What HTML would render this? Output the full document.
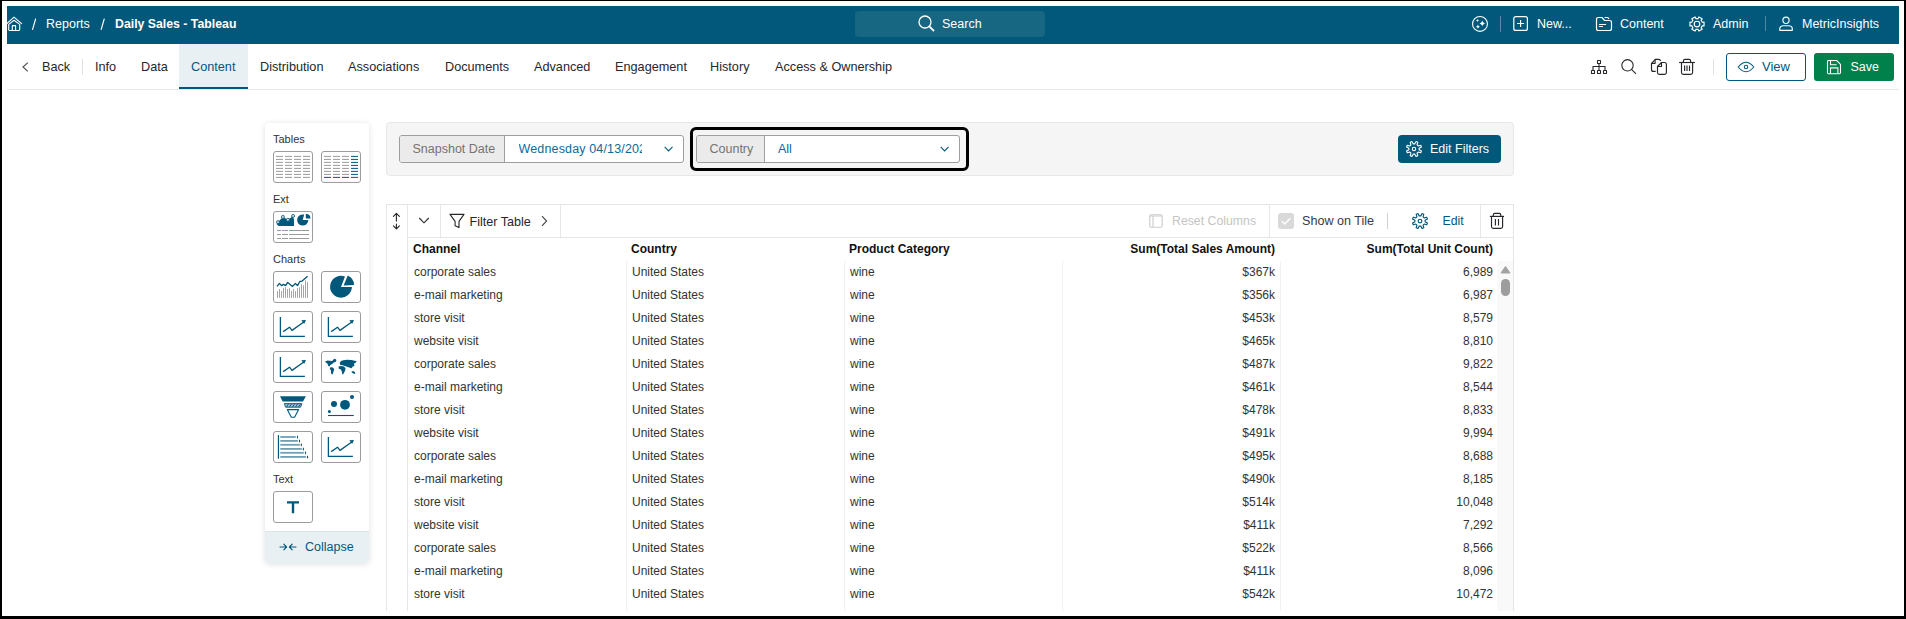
<!DOCTYPE html>
<html><head><meta charset="utf-8">
<style>
*{box-sizing:border-box;margin:0;padding:0}
html,body{width:1906px;height:619px;overflow:hidden;background:#000;font-family:"Liberation Sans",sans-serif}
#frame{position:absolute;left:2px;top:1px;width:1902px;height:615px;background:#fff;overflow:hidden}
.a{position:absolute;white-space:nowrap}
svg{position:absolute;overflow:visible}
#hdr{position:absolute;left:7px;top:6px;width:1892px;height:38px;background:#02587b}
.ht{color:#fff;font-size:12.5px;top:15.5px;line-height:16px}
.tab{font-size:12.7px;color:#26272b;top:59px;line-height:16px}
.box{position:absolute;width:40px;height:32px;border:1px solid #9c9c9c;border-radius:3px;background:#fff}
.pl{font-size:11px;line-height:14px;color:#333}
.ft{font-size:12.5px;line-height:16px;top:141px}
.tt{font-size:12.3px;line-height:16px;top:213px;color:#26272b}
.th{font-size:12px;line-height:14px;font-weight:bold;color:#111;top:242px}
.td{font-size:12px;line-height:14px;color:#333}
</style></head>
<body>
<div id="frame"></div>
<div id="hdr"></div>

<!-- header left -->
<svg style="left:5px;top:12px" width="20" height="22" viewBox="0 0 20 22" fill="none" stroke="#fff" stroke-width="1.1" stroke-linejoin="round" stroke-linecap="round">
  <path d="M2.1 11.4 L9 5.2 L16.6 11.6"/>
  <path d="M3.7 12.4 L9 8.3 L14.7 12.4 V17.6 Q14.7 18.5 13.8 18.5 H4.6 Q3.7 18.5 3.7 17.6Z"/>
  <path d="M7.3 18.5 V13.6 H10.6 V18.5"/>
</svg>
<svg style="left:0;top:0" width="120" height="40" viewBox="0 0 120 40"><path d="M35.6 19 L32.6 29.4 M104.2 19 L101.2 29.4" stroke="#fff" stroke-width="1.15" stroke-linecap="round"/></svg>
<div class="a ht" style="left:46px">Reports</div>

<div class="a ht" style="left:115px;font-weight:bold;font-size:12.3px">Daily Sales - Tableau</div>

<!-- search -->
<div class="a" style="left:855px;top:11px;width:190px;height:26px;background:#176782;border-radius:4px"></div>
<svg style="left:918px;top:15px" width="17" height="17" viewBox="0 0 17 17" fill="none" stroke="#fff" stroke-width="1.3">
  <circle cx="7" cy="7" r="6"/><path d="M11.3 11.3 L16 16" stroke-width="1.8"/>
</svg>
<div class="a ht" style="left:942px">Search</div>

<!-- header right -->
<svg style="left:1468px;top:12px" width="64" height="24" viewBox="0 0 64 24">
  <circle cx="12" cy="11.9" r="7.45" fill="none" stroke="#fff" stroke-width="1.1"/>
  <path d="M14.3 8.7 Q14.894 10.806000000000001 17.0 11.4 Q14.894 11.994 14.3 14.100000000000001 Q13.706000000000001 11.994 11.600000000000001 11.4 Q13.706000000000001 10.806000000000001 14.3 8.7Z" fill="#fff"/>
  <path d="M9.5 7.0 Q9.83 8.17 11.0 8.5 Q9.83 8.83 9.5 10.0 Q9.17 8.83 8.0 8.5 Q9.17 8.17 9.5 7.0Z" fill="#fff"/>
  <path d="M9.9 12.799999999999999 Q10.47 14.129999999999999 11.8 14.7 Q10.47 15.27 9.9 16.599999999999998 Q9.33 15.27 8.0 14.7 Q9.33 14.129999999999999 9.9 12.799999999999999Z" fill="#fff"/>
  <rect x="32" y="4" width="1" height="15.8" fill="#5a8ea6"/>
  <rect x="45.8" y="4.6" width="13.6" height="13.8" rx="2" fill="none" stroke="#fff" stroke-width="1.2"/>
  <path d="M52.6 7.9 V15 M49.1 11.45 H56.1" stroke="#fff" stroke-width="1.15"/>
</svg>
<div class="a ht" style="left:1537px">New...</div>
<svg style="left:1590px;top:12px" width="30" height="24" viewBox="0 0 30 24" fill="none" stroke="#fff" stroke-width="1.2" stroke-linejoin="round" stroke-linecap="round">
  <path d="M12 5.5 H8.5 Q6.5 5.5 6.5 7.5 V16.5 Q6.5 18.5 8.5 18.5 H19.5 Q21.5 18.5 21.5 16.5 V10.5 Q21.5 8.5 19.5 8.5 H14.6 L12 5.5Z"/>
  <path d="M15 5.5 H17.2 Q18.2 5.5 18.7 6.6"/>
  <path d="M9.4 12.5 H15.6 M9.4 14.5 H12.5"/>
</svg>
<div class="a ht" style="left:1620px">Content</div>
<svg style="left:1685px;top:11.6px" width="24" height="24" viewBox="0 0 24 24" fill="none" stroke="#fff" stroke-width="1.15" stroke-linejoin="round"><path d="M19.05 10.11 L19.05 13.89 L17.23 13.70 L16.09 15.68 L17.16 17.16 L13.89 19.05 L13.14 17.38 L10.86 17.38 L10.11 19.05 L6.84 17.16 L7.91 15.68 L6.77 13.70 L4.95 13.89 L4.95 10.11 L6.77 10.30 L7.91 8.32 L6.84 6.84 L10.11 4.95 L10.86 6.62 L13.14 6.62 L13.89 4.95 L17.16 6.84 L16.09 8.32 L17.23 10.30Z"/><circle cx="12" cy="12" r="2.8"/></svg>
<div class="a ht" style="left:1713px">Admin</div>
<div class="a" style="left:1765px;top:16px;width:1px;height:15px;background:#4f87a0"></div>
<svg style="left:1774px;top:12px" width="24" height="24" viewBox="0 0 24 24" fill="none" stroke="#fff" stroke-width="1.15" stroke-linejoin="round"><ellipse cx="12" cy="8.3" rx="3.1" ry="3.2"/><path d="M5.8 18.3 V16.8 Q5.8 13.75 9.5 13.75 H14.6 Q18.3 13.75 18.3 16.8 V18.3 Z"/></svg>
<div class="a ht" style="left:1802px">MetricInsights</div>

<!-- tabs row -->
<div class="a" style="left:179px;top:44px;width:69px;height:43px;background:#e9f0f3"></div>
<div class="a" style="left:179px;top:87px;width:69px;height:2px;background:#02587b"></div>
<div class="a" style="left:7px;top:89px;width:1892px;height:1px;background:#e8e8e8"></div>
<svg style="left:22px;top:62px" width="7" height="10" viewBox="0 0 7 10" fill="none" stroke="#555" stroke-width="1.2"><path d="M5.8 0.6 L1 5 L5.8 9.4"/></svg>
<div class="a tab" style="left:42px">Back</div>
<div class="a" style="left:82px;top:59px;width:1px;height:16px;background:#e2e2e2"></div>
<div class="a tab" style="left:95px">Info</div>
<div class="a tab" style="left:141px">Data</div>
<div class="a tab" style="left:191px;color:#02587b">Content</div>
<div class="a tab" style="left:260px">Distribution</div>
<div class="a tab" style="left:348px">Associations</div>
<div class="a tab" style="left:445px">Documents</div>
<div class="a tab" style="left:534px">Advanced</div>
<div class="a tab" style="left:615px">Engagement</div>
<div class="a tab" style="left:710px">History</div>
<div class="a tab" style="left:775px">Access &amp; Ownership</div>


<!-- right toolbar of tabs row -->
<svg style="left:1586px;top:55px" width="54" height="25" viewBox="0 0 54 25" fill="none" stroke="#26272b" stroke-width="1.1">
  <rect x="11.5" y="5.5" width="3" height="3" rx="0.3"/>
  <rect x="5.5" y="15.5" width="3" height="3" rx="0.3"/><rect x="11.5" y="15.5" width="3" height="3" rx="0.3"/><rect x="17.5" y="15.5" width="3" height="3" rx="0.3"/>
  <path d="M13 8.9 V15 M7 15 V11.5 H19 V15"/>
  <circle cx="41.5" cy="10.3" r="5.7"/><path d="M45.5 14.4 L50 18.9"/>
</svg>
<svg style="left:1646px;top:55px" width="54" height="25" viewBox="0 0 54 25" fill="none" stroke="#26272b" stroke-width="1.15" stroke-linejoin="round">
  <path d="M9.7 16.4 H7.5 Q5.5 16.4 5.5 14.4 V8.3 L9.3 4.3 H12.6 Q14.4 4.3 14.5 6"/>
  <path d="M5.7 8.3 H9.1 V4.5"/>
  <path d="M11.5 11.5 L15.5 7.5 H18.5 Q20.4 7.5 20.4 9.4 V17.5 Q20.4 19.4 18.5 19.4 H13.4 Q11.5 19.4 11.5 17.5 Z"/>
  <path d="M11.7 11.5 H15.5 V7.7"/>
  <path d="M33.1 7.5 H48.9"/>
  <path d="M37.4 7.3 V5.9 Q37.4 4.3 39 4.3 H43 Q44.6 4.3 44.6 5.9 V7.3"/>
  <path d="M35.5 7.5 V17.5 Q35.5 19.4 37.4 19.4 H44.7 Q46.6 19.4 46.6 17.5 V7.5"/>
  <path d="M38.6 10.5 V16 M41 10.5 V16 M43.5 10.5 V16"/>
</svg>
<div class="a" style="left:1713px;top:59px;width:1px;height:16px;background:#e2e2e2"></div>
<div class="a" style="left:1726px;top:53px;width:80px;height:28px;border:1.2px solid #02587b;border-radius:3px"></div>
<svg style="left:1726px;top:53px" width="30" height="28" viewBox="0 0 30 28" fill="none" stroke="#02587b" stroke-width="1.05"><path d="M12.2 14 Q20 4.6 27.8 14 Q20 23.4 12.2 14Z" stroke-linejoin="round"/><circle cx="20" cy="14" r="1.7"/></svg>
<div class="a" style="left:1762px;top:59px;font-size:13px;line-height:16px;color:#02587b">View</div>
<div class="a" style="left:1814px;top:53px;width:80px;height:28px;background:#00804a;border-radius:3px"></div>
<svg style="left:1814px;top:53px" width="30" height="28" viewBox="0 0 30 28" fill="none" stroke="#fff" stroke-width="1.1" stroke-linejoin="round">
  <path d="M14.6 7.5 H22.6 L26.5 11.3 V19.8 Q26.5 20.7 25.6 20.7 H14.2 Q13.5 20.7 13.5 19.8 V8.4 Q13.5 7.5 14.4 7.5Z"/>
  <path d="M16.5 7.6 V11.8 H22.6"/>
  <path d="M16.5 20.6 V14.9 H23.9 V20.6"/>
</svg>
<div class="a" style="left:1850.4px;top:59.3px;font-size:12.5px;line-height:16px;color:#fff">Save</div>


<!-- left panel -->
<div class="a" style="left:265px;top:123px;width:104px;height:440px;background:#fff;border-radius:4px;box-shadow:0 1px 6px rgba(0,0,0,0.13)"></div>
<div class="a" style="left:265px;top:531px;width:104px;height:32px;background:#e9f0f3;border-top:1px solid #dce5ea;border-radius:0 0 4px 4px"></div>
<div class="a pl" style="left:273px;top:132px">Tables</div>
<div class="a pl" style="left:273px;top:192px">Ext</div>
<div class="a pl" style="left:273px;top:252px">Charts</div>
<div class="a pl" style="left:273px;top:472px">Text</div>
<div class="box" style="left:273px;top:151px"></div><svg style="left:273px;top:151px" width="40" height="32" viewBox="0 0 40 32"><path d="M3 5.4 H10" stroke="#9a9a9a" stroke-width="1"/><path d="M12 5.4 H19" stroke="#9a9a9a" stroke-width="1"/><path d="M21 5.4 H28" stroke="#9a9a9a" stroke-width="1"/><path d="M30 5.4 H37" stroke="#9a9a9a" stroke-width="1"/><path d="M3 8.4 H10" stroke="#9a9a9a" stroke-width="1"/><path d="M12 8.4 H19" stroke="#9a9a9a" stroke-width="1"/><path d="M21 8.4 H28" stroke="#9a9a9a" stroke-width="1"/><path d="M30 8.4 H37" stroke="#9a9a9a" stroke-width="1"/><path d="M3 11.4 H10" stroke="#9a9a9a" stroke-width="1"/><path d="M12 11.4 H19" stroke="#9a9a9a" stroke-width="1"/><path d="M21 11.4 H28" stroke="#9a9a9a" stroke-width="1"/><path d="M30 11.4 H37" stroke="#9a9a9a" stroke-width="1"/><path d="M3 14.4 H10" stroke="#9a9a9a" stroke-width="1"/><path d="M12 14.4 H19" stroke="#9a9a9a" stroke-width="1"/><path d="M21 14.4 H28" stroke="#9a9a9a" stroke-width="1"/><path d="M30 14.4 H37" stroke="#9a9a9a" stroke-width="1"/><path d="M3 17.4 H10" stroke="#9a9a9a" stroke-width="1"/><path d="M12 17.4 H19" stroke="#9a9a9a" stroke-width="1"/><path d="M21 17.4 H28" stroke="#9a9a9a" stroke-width="1"/><path d="M30 17.4 H37" stroke="#9a9a9a" stroke-width="1"/><path d="M3 20.4 H10" stroke="#9a9a9a" stroke-width="1"/><path d="M12 20.4 H19" stroke="#9a9a9a" stroke-width="1"/><path d="M21 20.4 H28" stroke="#9a9a9a" stroke-width="1"/><path d="M30 20.4 H37" stroke="#9a9a9a" stroke-width="1"/><path d="M3 23.4 H10" stroke="#9a9a9a" stroke-width="1"/><path d="M12 23.4 H19" stroke="#9a9a9a" stroke-width="1"/><path d="M21 23.4 H28" stroke="#9a9a9a" stroke-width="1"/><path d="M30 23.4 H37" stroke="#9a9a9a" stroke-width="1"/><path d="M3 26.4 H10" stroke="#9a9a9a" stroke-width="1"/><path d="M12 26.4 H19" stroke="#9a9a9a" stroke-width="1"/><path d="M21 26.4 H28" stroke="#9a9a9a" stroke-width="1"/><path d="M30 26.4 H37" stroke="#9a9a9a" stroke-width="1"/></svg>
<div class="box" style="left:321px;top:151px"></div><svg style="left:321px;top:151px" width="40" height="32" viewBox="0 0 40 32"><path d="M3 5.4 H10" stroke="#9a9a9a" stroke-width="1"/><path d="M12 5.4 H19" stroke="#9a9a9a" stroke-width="1"/><path d="M21 5.4 H28" stroke="#9a9a9a" stroke-width="1"/><path d="M30 5.4 H37" stroke="#02587b" stroke-width="1"/><path d="M3 8.4 H10" stroke="#9a9a9a" stroke-width="1"/><path d="M12 8.4 H19" stroke="#9a9a9a" stroke-width="1"/><path d="M21 8.4 H28" stroke="#9a9a9a" stroke-width="1"/><path d="M30 8.4 H37" stroke="#02587b" stroke-width="1"/><path d="M3 11.4 H10" stroke="#9a9a9a" stroke-width="1"/><path d="M12 11.4 H19" stroke="#9a9a9a" stroke-width="1"/><path d="M21 11.4 H28" stroke="#9a9a9a" stroke-width="1"/><path d="M30 11.4 H37" stroke="#02587b" stroke-width="1"/><path d="M3 14.4 H10" stroke="#9a9a9a" stroke-width="1"/><path d="M12 14.4 H19" stroke="#9a9a9a" stroke-width="1"/><path d="M21 14.4 H28" stroke="#9a9a9a" stroke-width="1"/><path d="M30 14.4 H37" stroke="#02587b" stroke-width="1"/><path d="M3 17.4 H10" stroke="#9a9a9a" stroke-width="1"/><path d="M12 17.4 H19" stroke="#9a9a9a" stroke-width="1"/><path d="M21 17.4 H28" stroke="#9a9a9a" stroke-width="1"/><path d="M30 17.4 H37" stroke="#02587b" stroke-width="1"/><path d="M3 20.4 H10" stroke="#9a9a9a" stroke-width="1"/><path d="M12 20.4 H19" stroke="#9a9a9a" stroke-width="1"/><path d="M21 20.4 H28" stroke="#9a9a9a" stroke-width="1"/><path d="M30 20.4 H37" stroke="#02587b" stroke-width="1"/><path d="M3 23.4 H10" stroke="#9a9a9a" stroke-width="1"/><path d="M12 23.4 H19" stroke="#9a9a9a" stroke-width="1"/><path d="M21 23.4 H28" stroke="#9a9a9a" stroke-width="1"/><path d="M30 23.4 H37" stroke="#02587b" stroke-width="1"/><path d="M3 26.4 H10" stroke="#02587b" stroke-width="1"/><path d="M12 26.4 H19" stroke="#02587b" stroke-width="1"/><path d="M21 26.4 H28" stroke="#02587b" stroke-width="1"/><path d="M30 26.4 H37" stroke="#02587b" stroke-width="1"/></svg>
<div class="box" style="left:273px;top:211px"></div><svg style="left:273px;top:211px" width="40" height="32" viewBox="0 0 40 32"><g fill="#02587b"><path d="M3.5 13 L5 11.1 L9.9 5.9 L14.9 8.8 L20.1 4.9 L21 9 V14.9 H5.5 Z"/>
<path d="M29.7 9 L31.2 3.6 A5.6 5.6 0 1 0 35.3 9 Z"/><path d="M32.6 2.7 A5 5 0 0 1 37.3 7.6 L32.6 7.6 Z" transform="translate(0.2,0)"/></g>
<g fill="#cfdde5" stroke="#02587b" stroke-width="0.8"><circle cx="5" cy="11.1" r="1.5"/><circle cx="9.9" cy="5.9" r="1.5"/><circle cx="14.9" cy="8.8" r="1.5"/><circle cx="20.1" cy="4.9" r="1.5"/></g>
<g stroke="#9a9a9a" stroke-width="1"><path d="M4 19.5H8M9 19.5H15M16 19.5H36M4 23.5H8M9 23.5H15M16 23.5H36M4 27.5H8M9 27.5H15M16 27.5H36"/></g></svg>
<div class="box" style="left:273px;top:271px"></div><svg style="left:273px;top:271px" width="40" height="32" viewBox="0 0 40 32"><path d="M4.5 26.8 V20.1" stroke="#9a9a9a" stroke-width="0.9"/><path d="M6.5 26.8 V18" stroke="#9a9a9a" stroke-width="0.9"/><path d="M8.5 26.8 V20.1" stroke="#9a9a9a" stroke-width="0.9"/><path d="M10.5 26.8 V16.9" stroke="#9a9a9a" stroke-width="0.9"/><path d="M12.5 26.8 V16.3" stroke="#9a9a9a" stroke-width="0.9"/><path d="M14.5 26.8 V18" stroke="#9a9a9a" stroke-width="0.9"/><path d="M16.5 26.8 V17.2" stroke="#9a9a9a" stroke-width="0.9"/><path d="M18.5 26.8 V20.1" stroke="#9a9a9a" stroke-width="0.9"/><path d="M20.5 26.8 V18" stroke="#9a9a9a" stroke-width="0.9"/><path d="M22.5 26.8 V20.1" stroke="#9a9a9a" stroke-width="0.9"/><path d="M24.5 26.8 V17.2" stroke="#9a9a9a" stroke-width="0.9"/><path d="M26.5 26.8 V16.3" stroke="#9a9a9a" stroke-width="0.9"/><path d="M28.5 26.8 V13.1" stroke="#9a9a9a" stroke-width="0.9"/><path d="M30.5 26.8 V14.3" stroke="#9a9a9a" stroke-width="0.9"/><path d="M32.5 26.8 V9.3" stroke="#9a9a9a" stroke-width="0.9"/><path d="M34.5 26.8 V11.1" stroke="#9a9a9a" stroke-width="0.9"/><polyline points="4.1,15.4 6.4,12.4 8.5,14.6 10.5,13.4 12.5,14.6 14.7,11.5 19.5,15.4 22.4,12.5 24.5,14.6 26.8,10.5 28.8,10.2 34.6,5.3" fill="none" stroke="#02587b" stroke-width="1.3" stroke-linejoin="round"/></svg>
<div class="box" style="left:321px;top:271px"></div><svg style="left:321px;top:271px" width="40" height="32" viewBox="0 0 40 32"><g fill="#02587b"><path d="M20 16 L24 5.6 A10.9 10.9 0 1 0 30.9 16 Z"/><path d="M22.6 14.6 L26.8 4.6 A10.9 10.9 0 0 1 33.1 14 Z"/></g></svg>
<div class="box" style="left:273px;top:311px"></div><svg style="left:273px;top:311px" width="40" height="32" viewBox="0 0 40 32"><path d="M7.4 6.1 V25.3 H31.9" fill="none" stroke="#02587b" stroke-width="1.3"/><polyline points="10.2,20.6 16.5,16.2 19,19.4 30.4,11.3" fill="none" stroke="#02587b" stroke-width="1.3" stroke-linejoin="round"/><path d="M28.3 9.2 L33 8.9 L31.1 13 Z" fill="#02587b"/></svg>
<div class="box" style="left:321px;top:311px"></div><svg style="left:321px;top:311px" width="40" height="32" viewBox="0 0 40 32"><path d="M7.4 6.1 V25.3 H31.9" fill="none" stroke="#02587b" stroke-width="1.3"/><polyline points="10.2,20.6 16.5,16.2 19,19.4 30.4,11.3" fill="none" stroke="#02587b" stroke-width="1.3" stroke-linejoin="round"/><path d="M28.3 9.2 L33 8.9 L31.1 13 Z" fill="#02587b"/></svg>
<div class="box" style="left:273px;top:351px"></div><svg style="left:273px;top:351px" width="40" height="32" viewBox="0 0 40 32"><path d="M7.4 6.1 V25.3 H31.9" fill="none" stroke="#02587b" stroke-width="1.3"/><polyline points="10.2,20.6 16.5,16.2 19,19.4 30.4,11.3" fill="none" stroke="#02587b" stroke-width="1.3" stroke-linejoin="round"/><path d="M28.3 9.2 L33 8.9 L31.1 13 Z" fill="#02587b"/></svg>
<div class="box" style="left:321px;top:351px"></div><svg style="left:321px;top:351px" width="40" height="32" viewBox="0 0 40 32"><g fill="#02587b"><path d="M4.1 10.5 L6.7 9.6 L10.8 9.9 L12.2 9.3 L15.4 8.8 L14.9 10.5 L12.5 11.7 L11.1 13.1 L9.3 14 L8.5 15.4 L7.3 14.9 L6.4 12.5 L5 11.7Z"/><path d="M9 16.6 L11.4 16.3 L13.2 18 L12.5 20.7 L11.4 23.6 L10.2 23 L9.9 19.5 L8.8 17.5Z"/><path d="M19.8 9.9 L22.4 9.3 L25.9 8.8 L30.6 9 L35.8 10.2 L34.6 11.7 L32.9 12.8 L33.5 14.9 L31.7 15.4 L30.6 17.2 L28.2 16.6 L25.3 15.4 L23.6 14.9 L21.8 14.2 L19.4 14.1 L18.6 12 L19.5 11.1Z"/><path d="M17.5 15.6 L20.1 15.1 L23 15.4 L24.5 17.2 L24.2 19.5 L23 21.8 L22.1 23.6 L21.3 23.3 L20.7 20.1 L19.5 18.3 L17.8 17.8Z"/><path d="M30.3 20.7 L32.3 20.1 L33.8 21 L34.3 23 L32.9 22.7 L31.1 21.8Z"/><circle cx="13.6" cy="9.2" r="1.5"/></g></svg>
<div class="box" style="left:273px;top:391px"></div><svg style="left:273px;top:391px" width="40" height="32" viewBox="0 0 40 32"><path d="M7 5.3 H32.9 L30 10.5 H9.6 Z" fill="#02587b"/>
<path d="M11.3 12.6 H28.9 L27.6 16.2 H12.6 Z" fill="#9dbccb" stroke="#02587b" stroke-width="0.9"/>
<path d="M13.5 16 L15.5 13 M16.5 16 L18.5 13 M19.5 16 L21.5 13 M22.5 16 L24.5 13 M25.5 16 L27.5 13" stroke="#02587b" stroke-width="0.9"/>
<path d="M14.3 18.6 H25.6 L21.6 26.3 H18.3 Z" fill="none" stroke="#02587b" stroke-width="1.1" stroke-linejoin="round"/></svg>
<div class="box" style="left:321px;top:391px"></div><svg style="left:321px;top:391px" width="40" height="32" viewBox="0 0 40 32"><g fill="#02587b"><circle cx="31" cy="5.9" r="2"/><circle cx="13" cy="13" r="3"/><circle cx="24" cy="13.8" r="4.9"/><circle cx="8.4" cy="20.4" r="1.5"/></g><path d="M7 24.5 H32.8" stroke="#02587b" stroke-width="1.1"/></svg>
<div class="box" style="left:273px;top:431px"></div><svg style="left:273px;top:431px" width="40" height="32" viewBox="0 0 40 32"><path d="M5.45 4.1 V27.7" stroke="#02587b" stroke-width="1.2"/><path d="M7.3 6 H22.7" stroke="#6f9fb5" stroke-width="1.8"/><ellipse cx="24.5" cy="6" rx="0.6" ry="1.5" fill="#02587b"/><path d="M7.3 9.9 H24.9" stroke="#6f9fb5" stroke-width="1.8"/><ellipse cx="26.5" cy="9.9" rx="0.6" ry="1.5" fill="#02587b"/><path d="M7.3 13.8 H26.8" stroke="#6f9fb5" stroke-width="1.8"/><ellipse cx="28.3" cy="13.8" rx="0.6" ry="1.5" fill="#02587b"/><path d="M7.3 17.9 H28.8" stroke="#6f9fb5" stroke-width="1.8"/><ellipse cx="30.4" cy="17.9" rx="0.6" ry="1.5" fill="#02587b"/><path d="M7.3 21.8 H30.8" stroke="#6f9fb5" stroke-width="1.8"/><ellipse cx="32.5" cy="21.8" rx="0.6" ry="1.5" fill="#02587b"/><path d="M7.3 25.9 H32.9" stroke="#6f9fb5" stroke-width="1.8"/><ellipse cx="34.5" cy="25.9" rx="0.6" ry="1.5" fill="#02587b"/></svg>
<div class="box" style="left:321px;top:431px"></div><svg style="left:321px;top:431px" width="40" height="32" viewBox="0 0 40 32"><path d="M7.4 6.1 V25.3 H31.9" fill="none" stroke="#02587b" stroke-width="1.3"/><polyline points="10.2,20.6 16.5,16.2 19,19.4 30.4,11.3" fill="none" stroke="#02587b" stroke-width="1.3" stroke-linejoin="round"/><path d="M28.3 9.2 L33 8.9 L31.1 13 Z" fill="#02587b"/></svg>
<div class="box" style="left:273px;top:491px"></div><svg style="left:273px;top:491px" width="40" height="32" viewBox="0 0 40 32"><path d="M14 10.2 H26 V12.4 H21.2 V22.3 H18.8 V12.4 H14 Z" fill="#02587b"/></svg>

<svg style="left:279px;top:541px" width="18" height="12" viewBox="0 0 18 12" fill="none" stroke="#02587b" stroke-width="1.1" stroke-linecap="round" stroke-linejoin="round">
  <path d="M1 6 H7.5 M4.8 3.2 L7.6 6 L4.8 8.8"/><path d="M17 6 H10.5 M13.2 3.2 L10.4 6 L13.2 8.8"/>
</svg>
<div class="a" style="left:305px;top:538.5px;font-size:12.5px;line-height:16px;color:#02587b">Collapse</div>


<!-- filter bar -->
<div class="a" style="left:386px;top:122px;width:1128px;height:54px;background:#f5f5f5;border:1px solid #e7e7e7;border-radius:4px"></div>
<div class="a" style="left:399px;top:135px;width:285px;height:28px;background:#fff;border:1px solid #9e9e9e;border-radius:3px;overflow:hidden">
  <div class="a" style="left:0;top:0;width:105px;height:26px;background:#ebebeb;border-right:1px solid #9e9e9e"></div>
</div>
<div class="a ft" style="left:412.5px;color:#737373">Snapshot Date</div>
<div class="a ft" style="left:518.5px;color:#0d6a9b;width:123.7px;overflow:hidden;letter-spacing:0.15px">Wednesday 04/13/2022</div>
<svg style="left:664.3px;top:145.6px" width="10" height="7" viewBox="0 0 10 7" fill="none" stroke="#02587b" stroke-width="1.1"><path d="M0.7 0.9 L4.6 4.9 L8.5 0.9"/></svg>

<div class="a" style="left:690px;top:127px;width:279px;height:44px;border:3px solid #000;border-radius:6px"></div>
<div class="a" style="left:696px;top:135px;width:264px;height:28px;background:#fff;border:1px solid #9e9e9e;border-radius:3px;overflow:hidden">
  <div class="a" style="left:0;top:0;width:68px;height:26px;background:#ebebeb;border-right:1px solid #9e9e9e"></div>
</div>
<div class="a ft" style="left:709.5px;color:#737373">Country</div>
<div class="a ft" style="left:778px;color:#0d6a9b">All</div>
<svg style="left:940.3px;top:145.6px" width="10" height="7" viewBox="0 0 10 7" fill="none" stroke="#02587b" stroke-width="1.1"><path d="M0.7 0.9 L4.6 4.9 L8.5 0.9"/></svg>

<div class="a" style="left:1398px;top:135px;width:103px;height:28px;background:#02587b;border-radius:4px"></div>
<svg style="left:1402px;top:137px" width="24" height="24" viewBox="0 0 24 24" fill="none" stroke="#fff" stroke-width="1.1" stroke-linejoin="round"><path d="M19.42 14.06 L18.70 15.79 L16.21 15.06 L15.06 16.21 L15.79 18.70 L14.06 19.42 L12.81 17.14 L11.19 17.14 L9.94 19.42 L8.21 18.70 L8.94 16.21 L7.79 15.06 L5.30 15.79 L4.58 14.06 L6.86 12.81 L6.86 11.19 L4.58 9.94 L5.30 8.21 L7.79 8.94 L8.94 7.79 L8.21 5.30 L9.94 4.58 L11.19 6.86 L12.81 6.86 L14.06 4.58 L15.79 5.30 L15.06 7.79 L16.21 8.94 L18.70 8.21 L19.42 9.94 L17.14 11.19 L17.14 12.81Z"/><circle cx="12" cy="12" r="1.7"/></svg>
<div class="a ft" style="left:1430px;color:#fff">Edit Filters</div>

<!-- table -->
<div class="a" style="left:386px;top:204px;width:1128px;height:407px;border:1px solid #e6e6e6;border-bottom:none"></div>
<div class="a" style="left:407px;top:205px;width:1px;height:406px;background:#e6e6e6"></div>
<div class="a" style="left:408px;top:237px;width:1105px;height:1px;background:#e6e6e6"></div>
<div class="a" style="left:440px;top:205px;width:1px;height:32px;background:#e6e6e6"></div>
<div class="a" style="left:560px;top:205px;width:1px;height:32px;background:#e6e6e6"></div>
<div class="a" style="left:1269px;top:205px;width:1px;height:32px;background:#e6e6e6"></div>
<div class="a" style="left:1480px;top:205px;width:1px;height:32px;background:#e6e6e6"></div>
<svg style="left:390px;top:211px" width="12" height="20" viewBox="0 0 12 20" fill="none" stroke="#26272b" stroke-width="1.1" stroke-linecap="round" stroke-linejoin="round">
  <path d="M6.4 2.5 V10 M3.4 5.4 L6.4 2.4 L9.4 5.4"/><path d="M6.4 13 V17.8 M3.4 14.8 L6.4 17.8 L9.4 14.8"/>
</svg>
<svg style="left:418px;top:216px" width="12" height="9" viewBox="0 0 12 9" fill="none" stroke="#26272b" stroke-width="1.1"><path d="M1.2 2 L6 6.8 L10.8 2"/></svg>
<svg style="left:448px;top:212px" width="18" height="18" viewBox="0 0 18 18" fill="none" stroke="#26272b" stroke-width="1.1" stroke-linejoin="round">
  <path d="M2 2.4 H16 L11 9.4 V15.6 L7.1 13.8 V9.4 Z"/>
</svg>
<div class="a tt" style="left:469.5px;top:214px;font-size:12.6px">Filter Table</div>
<svg style="left:540px;top:215px" width="8" height="12" viewBox="0 0 8 12" fill="none" stroke="#444" stroke-width="1.1"><path d="M2 1.2 L6.6 6 L2 10.8"/></svg>

<svg style="left:1148px;top:213px" width="16" height="16" viewBox="0 0 16 16" fill="none" stroke="#cbcbcb" stroke-width="1.1"><rect x="1.75" y="1.75" width="12.4" height="12.5" rx="1.6"/><path d="M1.8 3 H14.1 M5 3 V14.2"/></svg>
<div class="a tt" style="left:1172px;color:#c4c4c4">Reset Columns</div>
<div class="a" style="left:1278px;top:213px;width:16px;height:16px;background:#d9d9d9;border-radius:3px"></div>
<svg style="left:1278px;top:213px" width="16" height="16" viewBox="0 0 16 16" fill="none" stroke="#fff" stroke-width="1.5"><path d="M3.8 8.2 L6.7 11 L12.3 5.2"/></svg>
<div class="a tt" style="left:1302px;color:#3a3a3a;font-size:12.6px">Show on Tile</div>
<div class="a" style="left:1387px;top:213px;width:1px;height:16px;background:#d0d0d0"></div>
<svg style="left:1408px;top:209px" width="24" height="24" viewBox="0 0 24 24" fill="none" stroke="#02587b" stroke-width="1.15" stroke-linejoin="round"><path d="M19.42 14.06 L18.70 15.79 L16.21 15.06 L15.06 16.21 L15.79 18.70 L14.06 19.42 L12.81 17.14 L11.19 17.14 L9.94 19.42 L8.21 18.70 L8.94 16.21 L7.79 15.06 L5.30 15.79 L4.58 14.06 L6.86 12.81 L6.86 11.19 L4.58 9.94 L5.30 8.21 L7.79 8.94 L8.94 7.79 L8.21 5.30 L9.94 4.58 L11.19 6.86 L12.81 6.86 L14.06 4.58 L15.79 5.30 L15.06 7.79 L16.21 8.94 L18.70 8.21 L19.42 9.94 L17.14 11.19 L17.14 12.81Z"/><circle cx="12" cy="12" r="1.8"/></svg>
<div class="a tt" style="left:1442.5px;color:#02587b">Edit</div>
<svg style="left:1480px;top:205px" width="34" height="32" viewBox="0 0 34 32" fill="none" stroke="#26272b" stroke-width="1.15" stroke-linejoin="round">
  <path d="M9.8 11.4 H24"/><path d="M13.3 11.3 V9.9 Q13.3 8.4 14.8 8.4 H19.3 Q20.8 8.4 20.8 9.9 V11.3"/>
  <path d="M11.5 11.5 V21.6 Q11.5 23.4 13.3 23.4 H20.8 Q22.6 23.4 22.6 21.6 V11.5"/>
  <path d="M15.4 14 V20.6 M18.5 14 V20.6"/>
</svg>

<div class="a th" style="left:413px">Channel</div>
<div class="a th" style="left:631px">Country</div>
<div class="a th" style="left:849px">Product Category</div>
<div class="a th" style="right:631px">Sum(Total Sales Amount)</div>
<div class="a th" style="right:413px">Sum(Total Unit Count)</div>
<div class="a" style="left:626px;top:261px;width:1px;height:350px;background:#f1f1f1"></div>
<div class="a" style="left:844px;top:261px;width:1px;height:350px;background:#f1f1f1"></div>
<div class="a" style="left:1062px;top:261px;width:1px;height:350px;background:#f1f1f1"></div>
<div class="a" style="left:1280px;top:261px;width:1px;height:350px;background:#f1f1f1"></div>
<div class="a" style="left:1497px;top:261px;width:16px;height:350px;background:#f9f9f9"></div>
<svg style="left:1500px;top:265px" width="11" height="9" viewBox="0 0 11 9"><path d="M1 8 L5.5 1.5 L10 8 Z" fill="#a3a3a3" stroke="#a3a3a3" stroke-width="1" stroke-linejoin="round"/></svg>
<div class="a" style="left:1501px;top:279px;width:9px;height:17px;background:#9d9d9d;border-radius:4.5px"></div>
<div class="a td" style="left:414px;top:265px">corporate sales</div><div class="a td" style="left:632px;top:265px">United States</div><div class="a td" style="left:850px;top:265px">wine</div><div class="a td" style="right:631px;top:265px">$367k</div><div class="a td" style="right:413px;top:265px">6,989</div>
<div class="a td" style="left:414px;top:288px">e-mail marketing</div><div class="a td" style="left:632px;top:288px">United States</div><div class="a td" style="left:850px;top:288px">wine</div><div class="a td" style="right:631px;top:288px">$356k</div><div class="a td" style="right:413px;top:288px">6,987</div>
<div class="a td" style="left:414px;top:311px">store visit</div><div class="a td" style="left:632px;top:311px">United States</div><div class="a td" style="left:850px;top:311px">wine</div><div class="a td" style="right:631px;top:311px">$453k</div><div class="a td" style="right:413px;top:311px">8,579</div>
<div class="a td" style="left:414px;top:334px">website visit</div><div class="a td" style="left:632px;top:334px">United States</div><div class="a td" style="left:850px;top:334px">wine</div><div class="a td" style="right:631px;top:334px">$465k</div><div class="a td" style="right:413px;top:334px">8,810</div>
<div class="a td" style="left:414px;top:357px">corporate sales</div><div class="a td" style="left:632px;top:357px">United States</div><div class="a td" style="left:850px;top:357px">wine</div><div class="a td" style="right:631px;top:357px">$487k</div><div class="a td" style="right:413px;top:357px">9,822</div>
<div class="a td" style="left:414px;top:380px">e-mail marketing</div><div class="a td" style="left:632px;top:380px">United States</div><div class="a td" style="left:850px;top:380px">wine</div><div class="a td" style="right:631px;top:380px">$461k</div><div class="a td" style="right:413px;top:380px">8,544</div>
<div class="a td" style="left:414px;top:403px">store visit</div><div class="a td" style="left:632px;top:403px">United States</div><div class="a td" style="left:850px;top:403px">wine</div><div class="a td" style="right:631px;top:403px">$478k</div><div class="a td" style="right:413px;top:403px">8,833</div>
<div class="a td" style="left:414px;top:426px">website visit</div><div class="a td" style="left:632px;top:426px">United States</div><div class="a td" style="left:850px;top:426px">wine</div><div class="a td" style="right:631px;top:426px">$491k</div><div class="a td" style="right:413px;top:426px">9,994</div>
<div class="a td" style="left:414px;top:449px">corporate sales</div><div class="a td" style="left:632px;top:449px">United States</div><div class="a td" style="left:850px;top:449px">wine</div><div class="a td" style="right:631px;top:449px">$495k</div><div class="a td" style="right:413px;top:449px">8,688</div>
<div class="a td" style="left:414px;top:472px">e-mail marketing</div><div class="a td" style="left:632px;top:472px">United States</div><div class="a td" style="left:850px;top:472px">wine</div><div class="a td" style="right:631px;top:472px">$490k</div><div class="a td" style="right:413px;top:472px">8,185</div>
<div class="a td" style="left:414px;top:495px">store visit</div><div class="a td" style="left:632px;top:495px">United States</div><div class="a td" style="left:850px;top:495px">wine</div><div class="a td" style="right:631px;top:495px">$514k</div><div class="a td" style="right:413px;top:495px">10,048</div>
<div class="a td" style="left:414px;top:518px">website visit</div><div class="a td" style="left:632px;top:518px">United States</div><div class="a td" style="left:850px;top:518px">wine</div><div class="a td" style="right:631px;top:518px">$411k</div><div class="a td" style="right:413px;top:518px">7,292</div>
<div class="a td" style="left:414px;top:541px">corporate sales</div><div class="a td" style="left:632px;top:541px">United States</div><div class="a td" style="left:850px;top:541px">wine</div><div class="a td" style="right:631px;top:541px">$522k</div><div class="a td" style="right:413px;top:541px">8,566</div>
<div class="a td" style="left:414px;top:564px">e-mail marketing</div><div class="a td" style="left:632px;top:564px">United States</div><div class="a td" style="left:850px;top:564px">wine</div><div class="a td" style="right:631px;top:564px">$411k</div><div class="a td" style="right:413px;top:564px">8,096</div>
<div class="a td" style="left:414px;top:587px">store visit</div><div class="a td" style="left:632px;top:587px">United States</div><div class="a td" style="left:850px;top:587px">wine</div><div class="a td" style="right:631px;top:587px">$542k</div><div class="a td" style="right:413px;top:587px">10,472</div>
<div class="a" style="left:2px;top:611px;width:1902px;height:5px;background:#fff"></div>

</body></html>
